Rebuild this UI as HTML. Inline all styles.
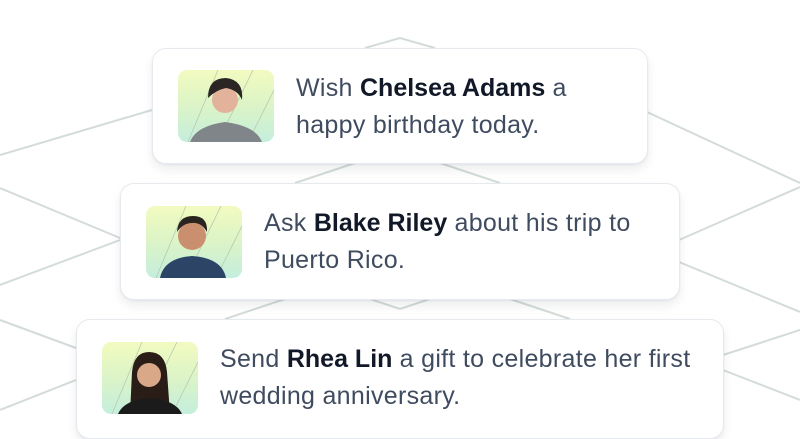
<!DOCTYPE html>
<html><head><style>
body{margin:0;width:800px;height:424px;overflow:hidden;background:#fff;font-family:"Liberation Sans",sans-serif;position:relative}
svg.bg{position:absolute;left:0;top:0}
.card{position:absolute;background:#fff;border:1px solid #e6e9ee;border-radius:14px;box-shadow:0 6px 10px rgba(30,40,60,0.08),0 1px 2px rgba(30,40,60,0.06);box-sizing:border-box}
.av{position:absolute;width:96px;height:72px;border-radius:9px;overflow:hidden;background:linear-gradient(180deg,#f2fbbf 0%,#d9f3c8 55%,#c4eedd 100%)}
.t{position:absolute;font-size:25px;line-height:37px;color:#3f4b5f;letter-spacing:0.3px;white-space:nowrap}
.t b{color:#111827;letter-spacing:0}
</style></head><body>
<svg class="bg" width="800" height="424" stroke="#d3dcd8" stroke-width="2" fill="none">
<path d="M365 48 L400 38 L435 48"/>
<path d="M0 155 L152 110"/><path d="M647 112 L800 183"/>
<path d="M295 183 L355 163"/><path d="M440 163 L500 183"/>
<path d="M0 188 L120 238"/><path d="M0 285 L120 240"/>
<path d="M800 187 L679 240"/><path d="M800 312 L679 262"/>
<path d="M225 319 L285 299"/><path d="M370 299 L400 309 L430 299"/><path d="M510 299 L570 319"/>
<path d="M0 320 L76 348"/><path d="M0 410 L76 380"/>
<path d="M800 330 L723 355"/><path d="M800 400 L723 370"/>
</svg>

<div class="card" style="left:152px;top:48px;width:496px;height:116px"></div>
<div class="card" style="left:120px;top:183px;width:560px;height:117px"></div>
<div class="card" style="left:76px;top:319px;width:648px;height:120px"></div>

<div class="av" style="left:178px;top:70px"><svg width="96" height="72"><g stroke="#b8c9b0" stroke-width="0.8" fill="none"><path d="M10 72 L40 0"/><path d="M40 72 L75 0"/><path d="M70 72 L96 20"/></g><circle cx="47" cy="30" r="13" fill="#e2b29a"/><path d="M30 28 Q30 8 48 8 Q66 10 64 30 Q60 20 48 18 Q38 20 30 28Z" fill="#2b2624"/><path d="M12 72 Q18 56 47 52 Q78 56 84 72Z" fill="#7f8588"/></svg></div>
<div class="av" style="left:146px;top:206px"><svg width="96" height="72"><g stroke="#b8c9b0" stroke-width="0.8" fill="none"><path d="M10 72 L40 0"/><path d="M40 72 L75 0"/><path d="M70 72 L96 20"/></g><circle cx="46" cy="30" r="14" fill="#c98f6e"/><path d="M31 26 Q32 10 47 10 Q62 10 61 26 Q55 16 46 17 Q37 17 31 26Z" fill="#2a2420"/><path d="M14 72 Q18 52 46 50 Q76 52 80 72Z" fill="#2c4466"/></svg></div>
<div class="av" style="left:102px;top:342px"><svg width="96" height="72"><g stroke="#b8c9b0" stroke-width="0.8" fill="none"><path d="M10 72 L40 0"/><path d="M40 72 L75 0"/><path d="M70 72 L96 20"/></g><path d="M28 72 L30 30 Q32 10 47 10 Q63 10 65 30 L68 72Z" fill="#2a1d17"/><circle cx="47" cy="33" r="12" fill="#d9a889"/><path d="M16 72 Q22 58 47 56 Q74 58 80 72Z" fill="#1b1b1b"/></svg></div>

<div class="t" style="left:296px;top:70px">Wish <b>Chelsea Adams</b> a<br>happy birthday today.</div>
<div class="t" style="left:264px;top:205px">Ask <b>Blake Riley</b> about his trip to<br>Puerto Rico.</div>
<div class="t" style="left:220px;top:341px">Send <b>Rhea Lin</b> a gift to celebrate her first<br>wedding anniversary.</div>
</body></html>
